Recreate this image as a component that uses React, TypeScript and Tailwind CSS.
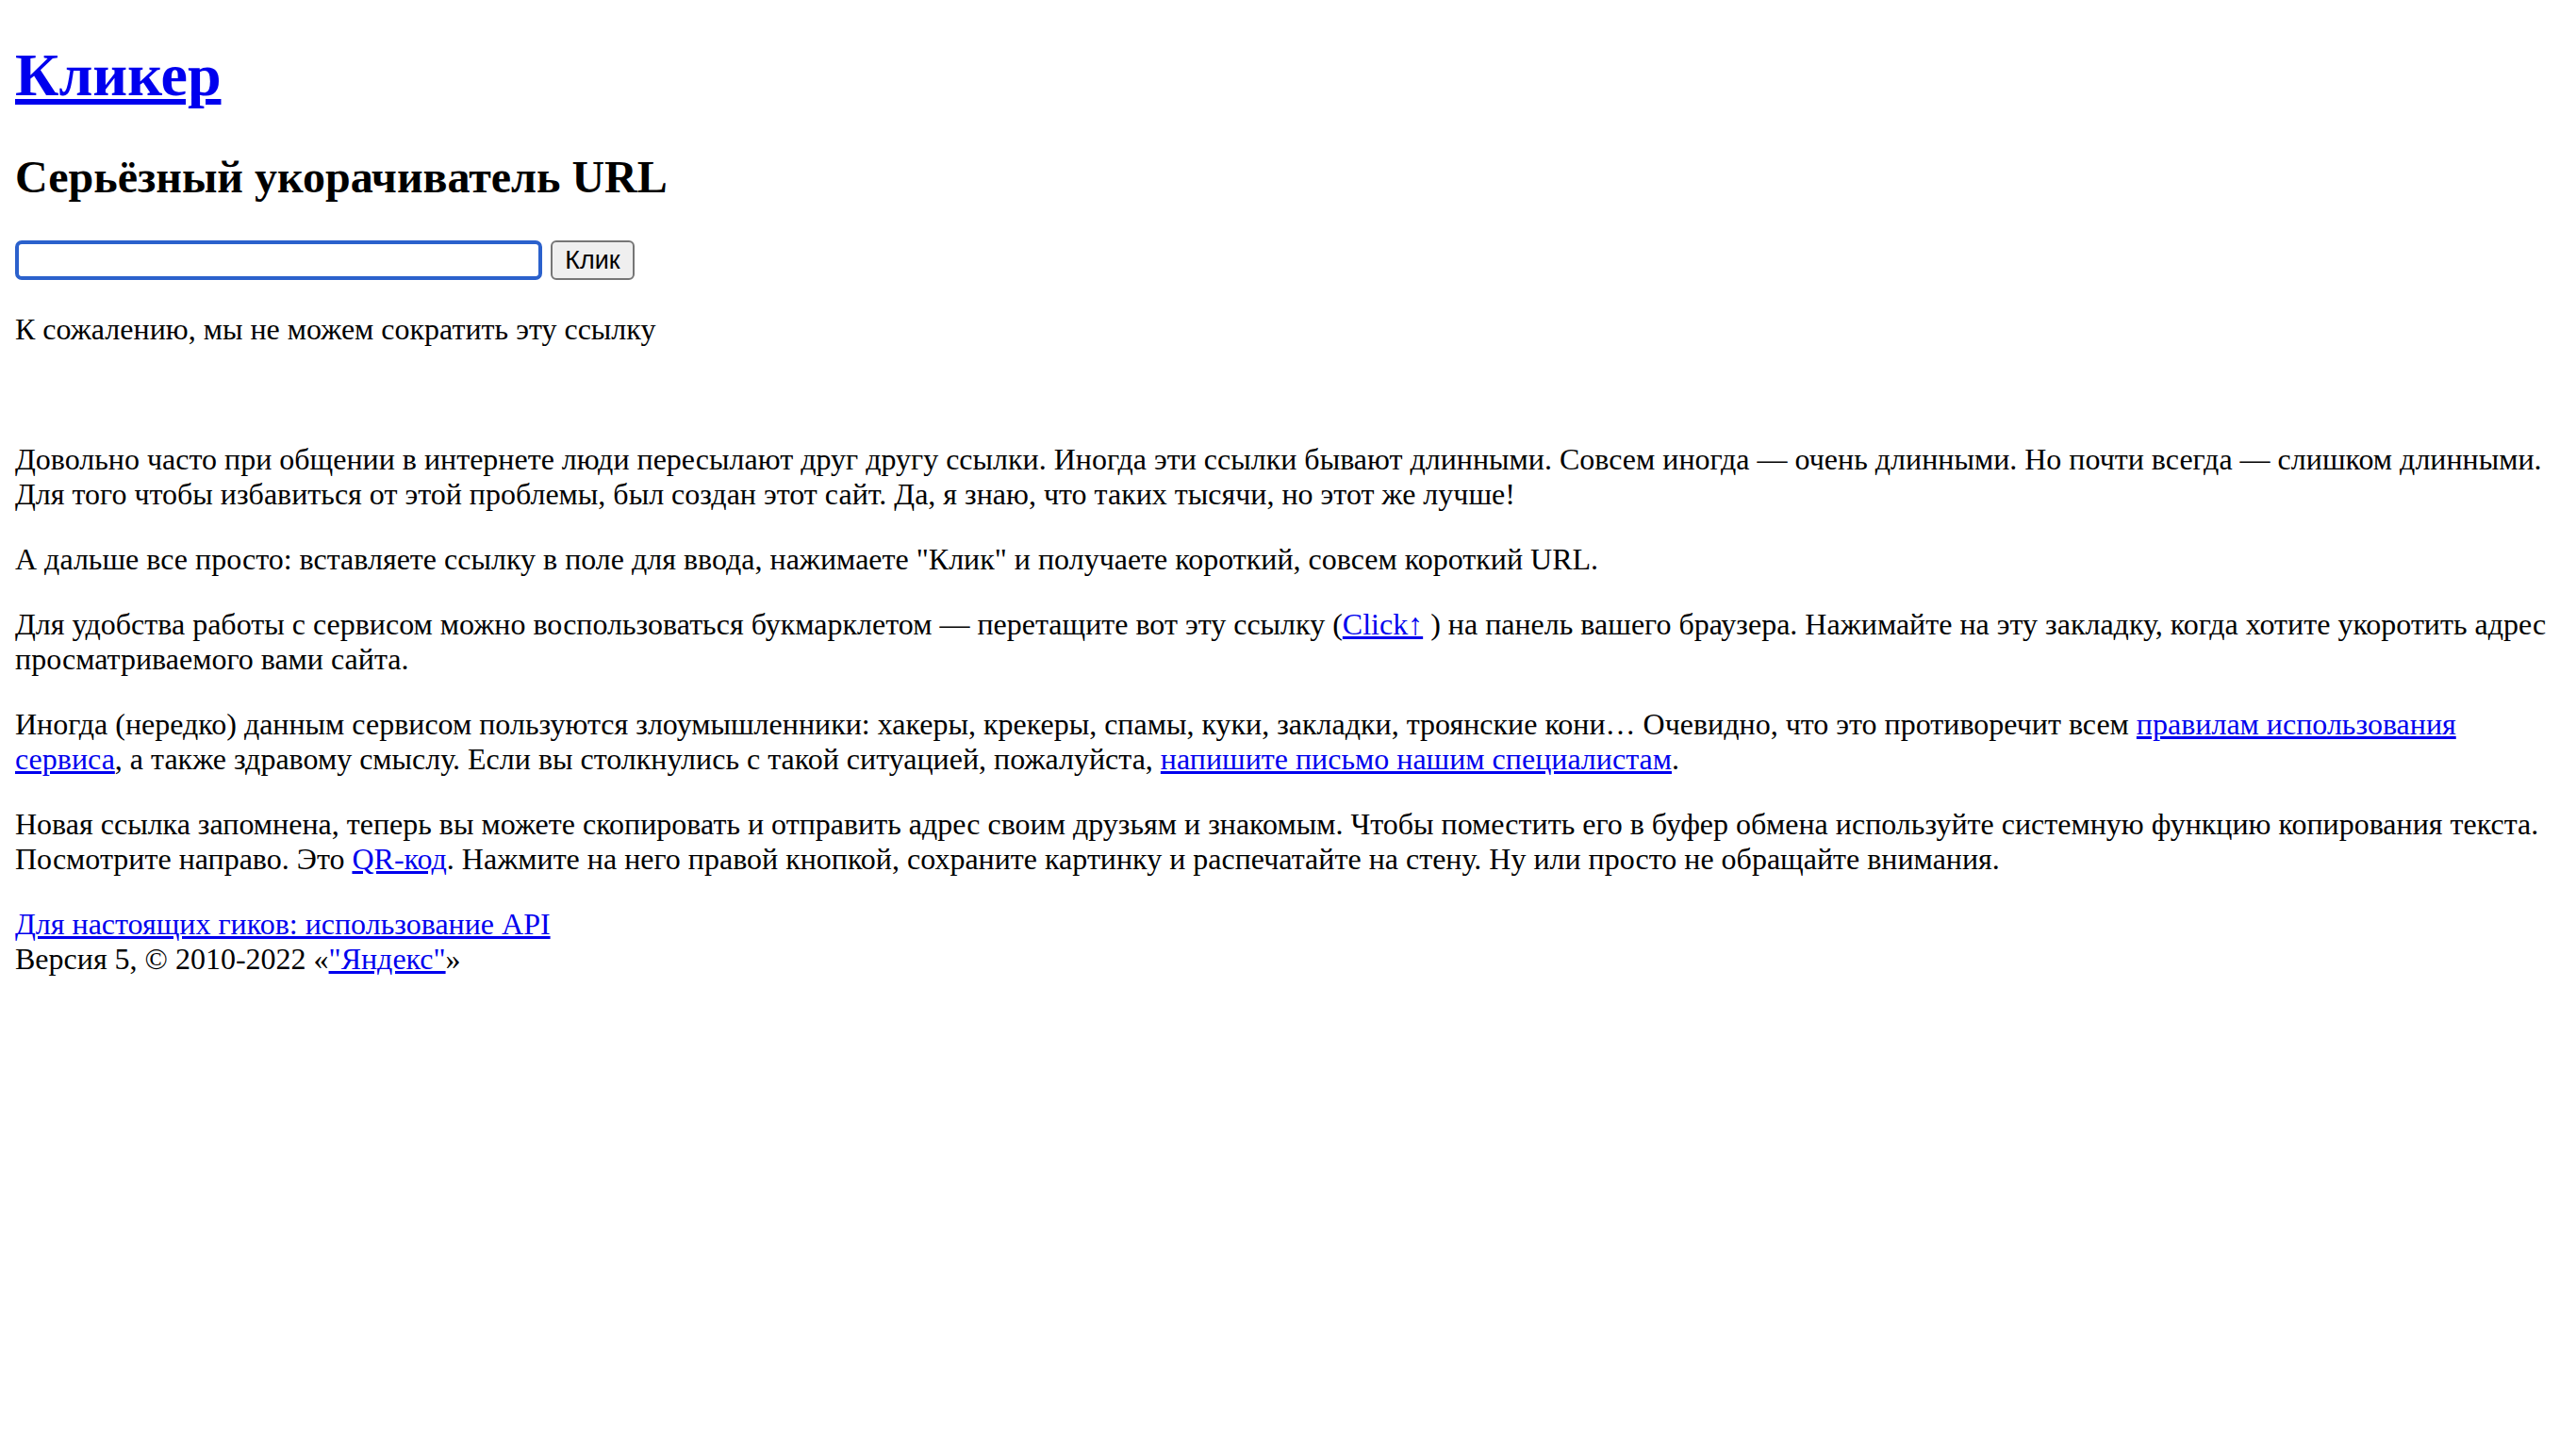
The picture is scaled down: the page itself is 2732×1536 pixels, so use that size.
import React from "react";

const linkCls = "text-[#0000EE] underline";

export default function App() {
  return (
    <div className="min-h-screen bg-white px-4 pb-4 font-['Liberation_Serif','Times_New_Roman',serif] text-[32px] leading-[normal] text-black">
      <h1 className="pt-[43px] text-[64px] font-bold leading-[normal]">
        <a href="#" className={linkCls}>
          Кликер
        </a>
      </h1>
      <h2 className="mt-[43px] text-[48px] font-bold leading-[normal]">
        Серьёзный укорачиватель URL
      </h2>
      <form
        className="mt-[40px] flex items-center gap-[9px]"
        onSubmit={(e) => e.preventDefault()}
      >
        <input
          type="text"
          className="box-border h-[42px] w-[559px] rounded-[7px] border-[4px] border-[#2b61cc] bg-white px-2 outline-none"
        />
        <button
          type="submit"
          className="box-border h-[42px] w-[89px] rounded-[6px] border-[2px] border-[#767676] bg-[#efefef] font-['Liberation_Sans',Arial,sans-serif] text-[27px] leading-none text-black"
        >
          Клик
        </button>
      </form>
      <p className="mt-[34px]">К сожалению, мы не можем сократить эту ссылку</p>

      <p className="mt-[101px]">
        Довольно часто при общении в интернете люди пересылают друг другу ссылки. Иногда эти ссылки бывают длинными.
        Совсем иногда — очень длинными. Но почти всегда — слишком длинными. Для того чтобы избавиться от этой проблемы,
        был создан этот сайт. Да, я знаю, что таких тысячи, но этот же лучше!
      </p>
      <p className="mt-[32px]">
        А дальше все просто: вставляете ссылку в поле для ввода, нажимаете "Клик" и получаете короткий, совсем короткий
        URL.
      </p>
      <p className="mt-[32px]">
        Для удобства работы с сервисом можно воспользоваться букмарклетом — перетащите вот эту ссылку (
        <a href="#" className={linkCls}>
          Click↑
        </a>{" "}
        ) на панель вашего браузера. Нажимайте на эту закладку, когда хотите укоротить адрес просматриваемого вами сайта.
      </p>
      <p className="mt-[32px]">
        Иногда (нередко) данным сервисом пользуются злоумышленники: хакеры, крекеры, спамы, куки, закладки, троянские
        кони… Очевидно, что это противоречит всем{" "}
        <a href="#" className={linkCls}>
          правилам использования сервиса
        </a>
        , а также здравому смыслу. Если вы столкнулись с такой ситуацией, пожалуйста,{" "}
        <a href="#" className={linkCls}>
          напишите письмо нашим специалистам
        </a>
        .
      </p>
      <p className="mt-[32px]">
        Новая ссылка запомнена, теперь вы можете скопировать и отправить адрес своим друзьям и знакомым. Чтобы поместить
        его в буфер обмена используйте системную функцию копирования текста. Посмотрите направо. Это{" "}
        <a href="#" className={linkCls}>
          QR-код
        </a>
        . Нажмите на него правой кнопкой, сохраните картинку и распечатайте на стену. Ну или просто не обращайте
        внимания.
      </p>
      <p className="mt-[32px]">
        <a href="#" className={linkCls}>
          Для настоящих гиков: использование API
        </a>
        <br />
        Версия 5, © 2010-2022 «
        <a href="#" className={linkCls}>
          "Яндекс"
        </a>
        »
      </p>
    </div>
  );
}
